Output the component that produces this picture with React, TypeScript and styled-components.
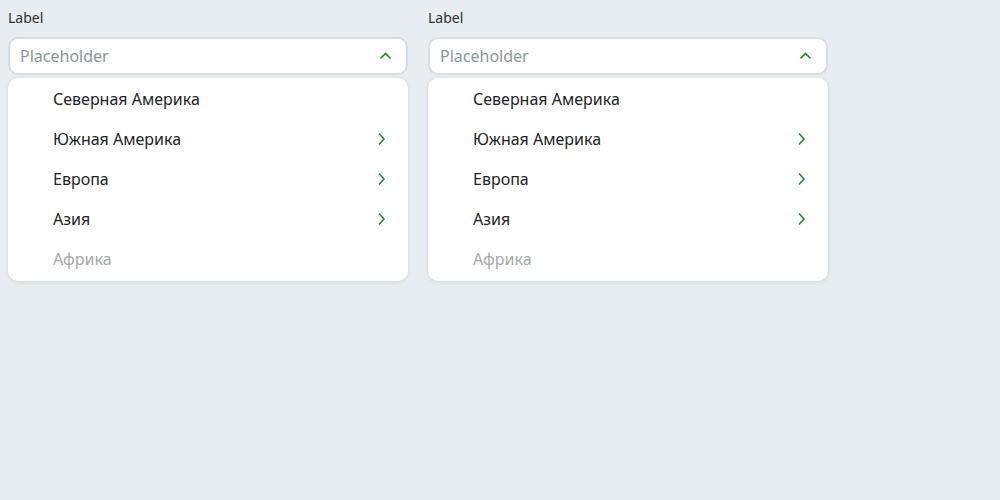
import * as React from 'react'
import styled, { createGlobalStyle } from 'styled-components'

const green = '#1f8a24'
const textMain = '#1d2226'
const textMuted = '#a3a8ad'

const GlobalStyle = createGlobalStyle`
  html, body {
    margin: 0;
    padding: 0;
    background: #e8edf1;
    font-family: 'Noto Sans', 'Open Sans', sans-serif;
  }
`

const Page = styled.div`
  display: flex;
  gap: 20px;
  padding: 8px;
  height: 500px;
  box-sizing: border-box;
  align-items: flex-start;
`

const Field = styled.div`
  width: 400px;
  display: flex;
  flex-direction: column;
`

const Label = styled.label`
  font-size: 14px;
  line-height: 20px;
  color: #2a2f33;
  margin-bottom: 9px;
`

const Control = styled.div`
  height: 38px;
  box-sizing: border-box;
  border: 2px solid #d4dde4;
  border-radius: 10px;
  background: #ffffff;
  display: flex;
  align-items: center;
  padding: 0 14px 0 10px;
`

const Placeholder = styled.span`
  flex: 1;
  font-size: 16px;
  color: #8a949c;
`

const Menu = styled.ul`
  list-style: none;
  margin: 3px 0 0;
  padding: 1px 0 2px;
  background: #ffffff;
  border-radius: 10px;
  box-shadow: 0 1px 4px rgba(40, 60, 80, 0.12);
`

const Item = styled.li<{ disabled?: boolean }>`
  height: 40px;
  display: flex;
  align-items: center;
  padding: 0 22px 0 45px;
  font-size: 16px;
  color: ${({ disabled }) => (disabled ? textMuted : textMain)};
`

const ItemText = styled.span`
  flex: 1;
`

function ChevronUp() {
  return (
    <svg width="13" height="10" viewBox="0 0 13 10" fill="none">
      <path d="M1.5 7.5 L6.5 2.5 L11.5 7.5" stroke={green} strokeWidth="1.6" />
    </svg>
  )
}

function ChevronRight() {
  return (
    <svg width="10" height="14" viewBox="0 0 10 14" fill="none">
      <path d="M3 1.5 L8 7 L3 12.5" stroke={green} strokeWidth="1.6" />
    </svg>
  )
}

const regions = [
  { name: 'Северная Америка', nested: false },
  { name: 'Южная Америка', nested: true },
  { name: 'Европа', nested: true },
  { name: 'Азия', nested: true },
  { name: 'Африка', nested: false, disabled: true },
]

function Select() {
  return (
    <Field>
      <Label>Label</Label>
      <Control>
        <Placeholder>Placeholder</Placeholder>
        <ChevronUp />
      </Control>
      <Menu>
        {regions.map((r) => (
          <Item key={r.name} disabled={r.disabled}>
            <ItemText>{r.name}</ItemText>
            {r.nested && <ChevronRight />}
          </Item>
        ))}
      </Menu>
    </Field>
  )
}

export default function App() {
  return (
    <>
      <GlobalStyle />
      <Page>
        <Select />
        <Select />
      </Page>
    </>
  )
}
